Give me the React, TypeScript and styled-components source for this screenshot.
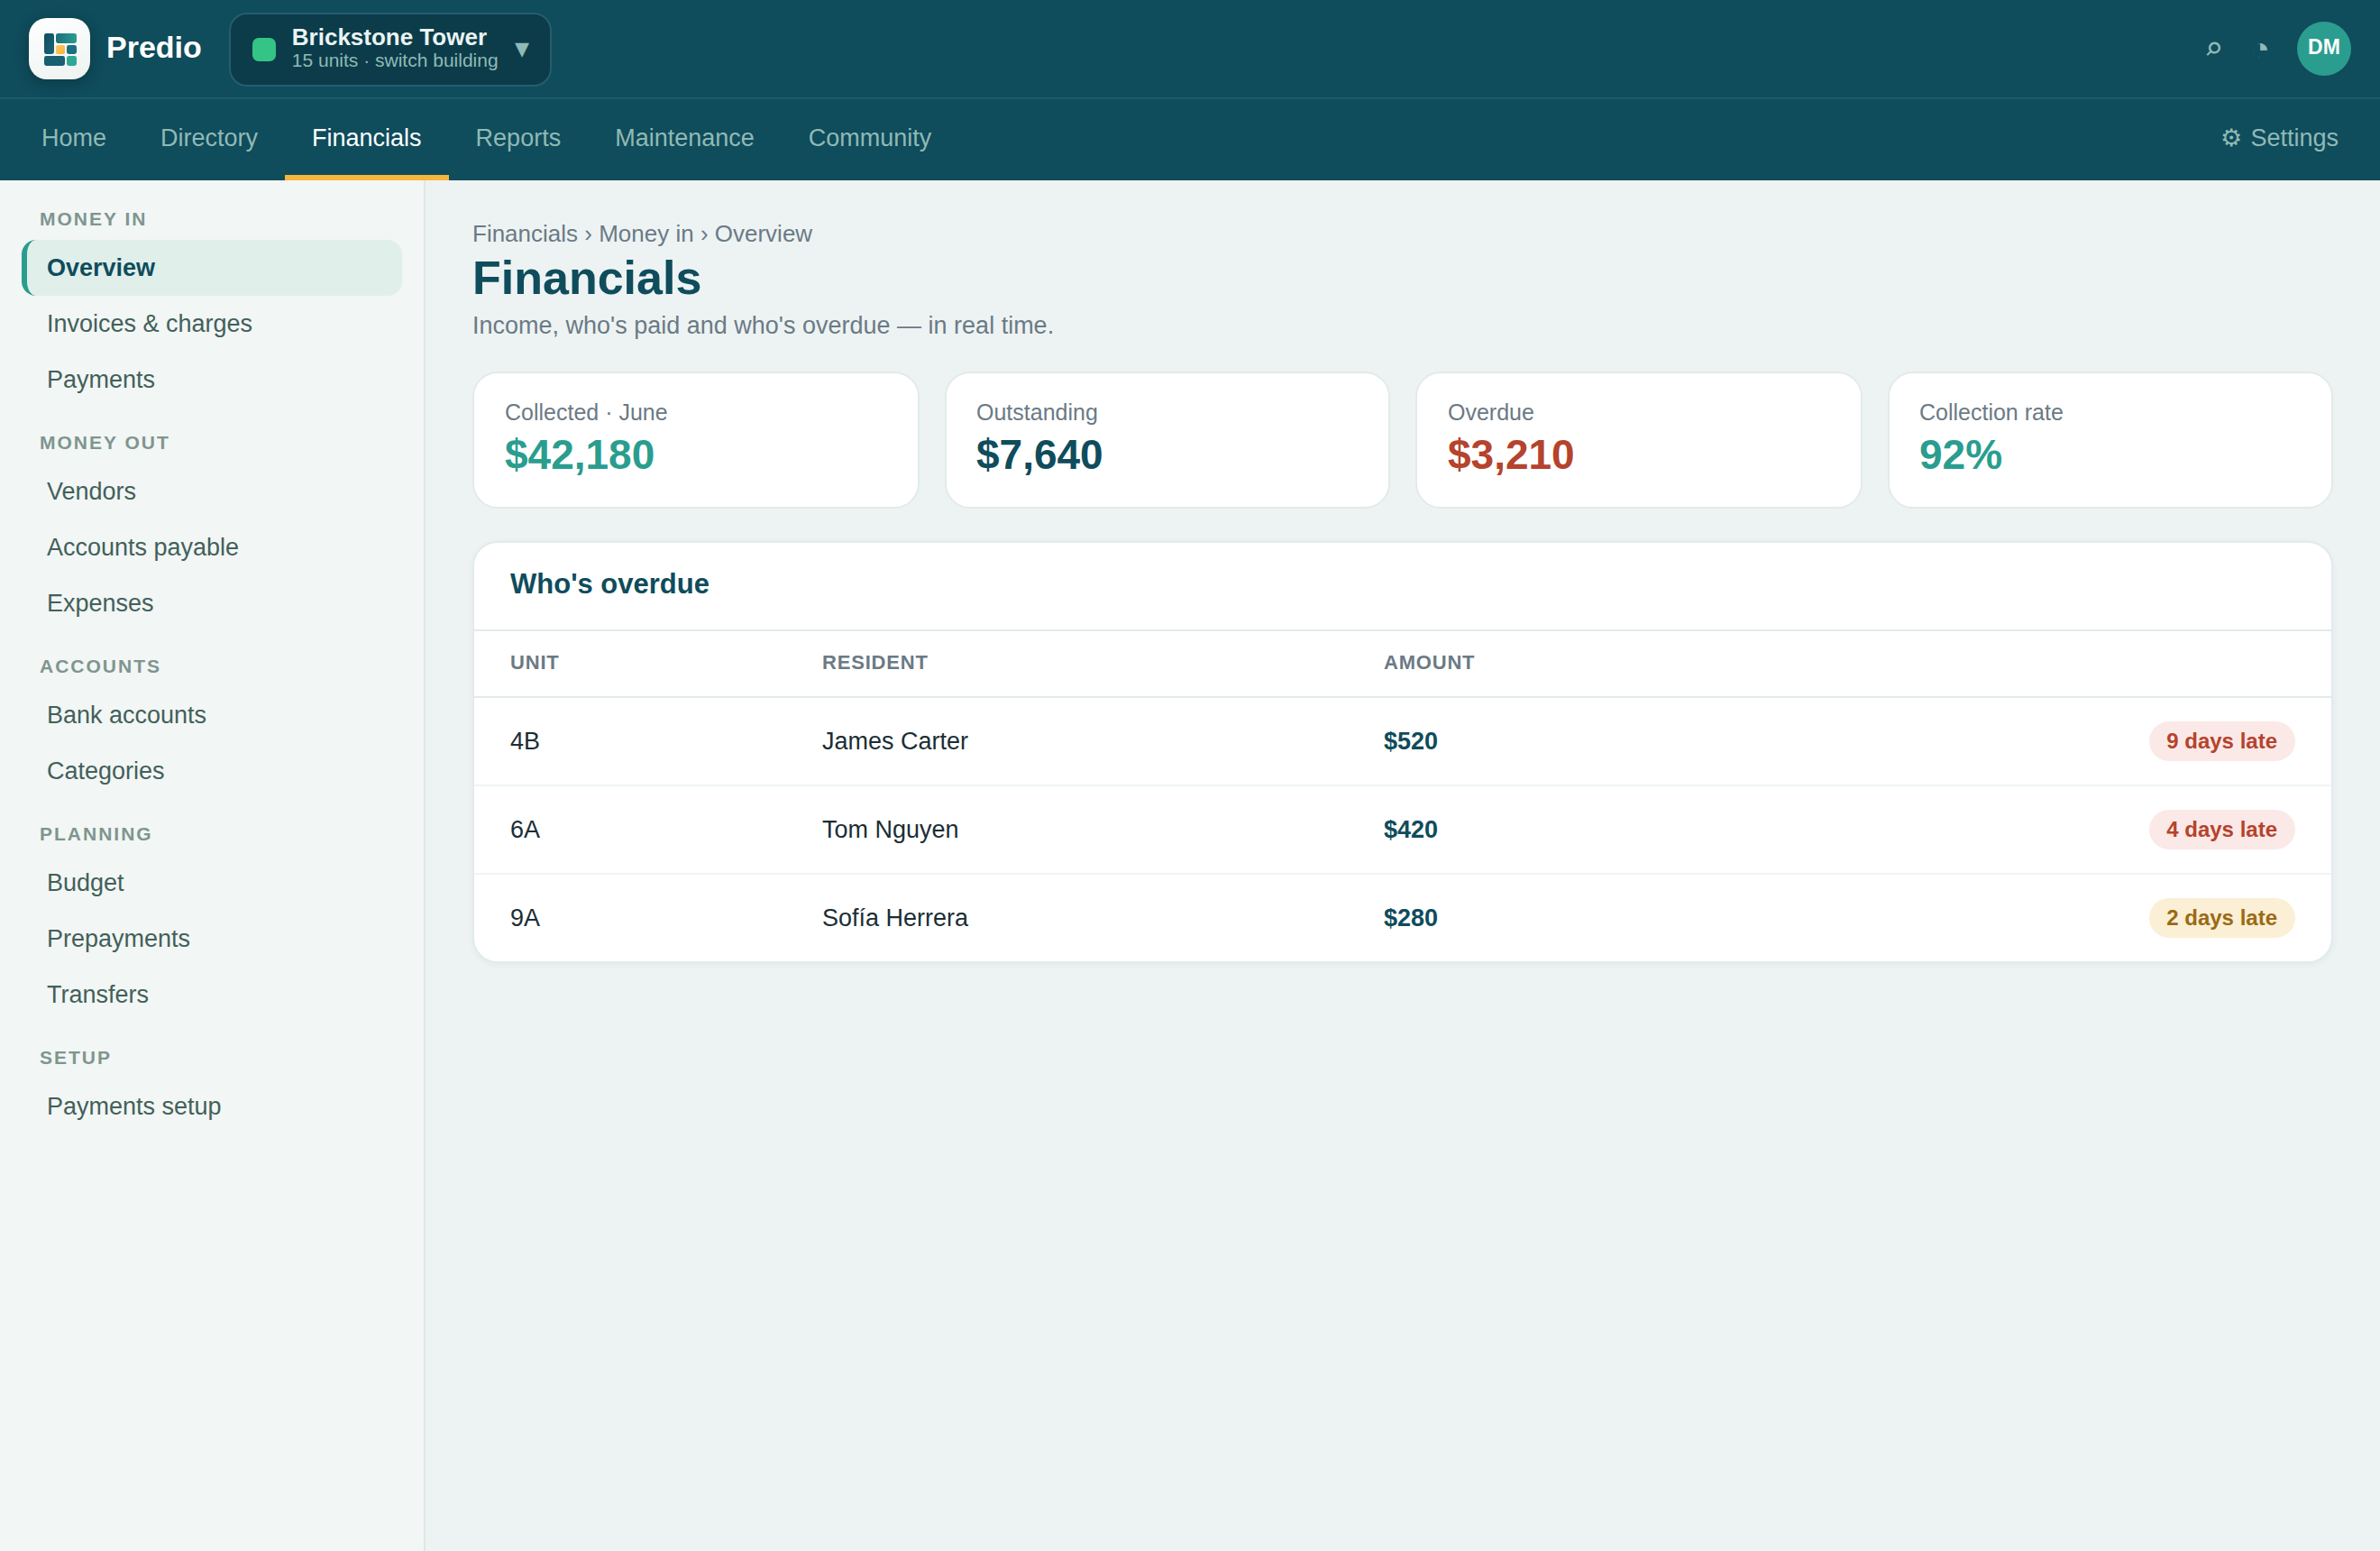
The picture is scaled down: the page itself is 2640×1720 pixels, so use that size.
import styled, { createGlobalStyle } from 'styled-components';

type Tone = 'teal' | 'navy' | 'red';
type BadgeTone = 'danger' | 'warning';

interface NavGroup {
  title: string;
  items: string[];
}
interface Stat {
  label: string;
  value: string;
  tone: Tone;
}
interface OverdueRow {
  unit: string;
  resident: string;
  amount: string;
  status: string;
  tone: BadgeTone;
}

const colors = {
  navy: '#0f4c5c',
  navyDark: '#0c3c49',
  teal: '#2a9d8f',
  amber: '#f6b53d',
  red: '#b5432d',
  mint: '#8fbab5',
  gray: '#6b7a85',
  line: '#e3ebea',
  ink: '#1b2e35',
};

const tones: Record<Tone, string> = {
  teal: colors.teal,
  navy: colors.navy,
  red: colors.red,
};

const tabs = [
  'Home',
  'Directory',
  'Financials',
  'Reports',
  'Maintenance',
  'Community',
];

const navGroups: NavGroup[] = [
  { title: 'Money in', items: ['Overview', 'Invoices & charges', 'Payments'] },
  { title: 'Money out', items: ['Vendors', 'Accounts payable', 'Expenses'] },
  { title: 'Accounts', items: ['Bank accounts', 'Categories'] },
  { title: 'Planning', items: ['Budget', 'Prepayments', 'Transfers'] },
  { title: 'Setup', items: ['Payments setup'] },
];

const stats: Stat[] = [
  { label: 'Collected · June', value: '$42,180', tone: 'teal' },
  { label: 'Outstanding', value: '$7,640', tone: 'navy' },
  { label: 'Overdue', value: '$3,210', tone: 'red' },
  { label: 'Collection rate', value: '92%', tone: 'teal' },
];

const overdue: OverdueRow[] = [
  {
    unit: '4B',
    resident: 'James Carter',
    amount: '$520',
    status: '9 days late',
    tone: 'danger',
  },
  {
    unit: '6A',
    resident: 'Tom Nguyen',
    amount: '$420',
    status: '4 days late',
    tone: 'danger',
  },
  {
    unit: '9A',
    resident: 'Sofía Herrera',
    amount: '$280',
    status: '2 days late',
    tone: 'warning',
  },
];

const LogoMark = () => (
  <svg width="36" height="36" viewBox="0 0 36 36">
    <defs>
      <linearGradient id="brickDark" x1="0" y1="0" x2="1" y2="1">
        <stop offset="0" stopColor="#0f4c5c" />
        <stop offset="1" stopColor="#1b6678" />
      </linearGradient>
      <linearGradient id="brickTeal" x1="0" y1="0" x2="1" y2="0">
        <stop offset="0" stopColor="#1b6f7c" />
        <stop offset="1" stopColor="#2a9d8f" />
      </linearGradient>
      <linearGradient id="brickAmber" x1="0" y1="0" x2="1" y2="1">
        <stop offset="0" stopColor="#ffcb5c" />
        <stop offset="1" stopColor="#f4b13c" />
      </linearGradient>
    </defs>
    <rect x="0" y="0" width="11" height="23" rx="2.4" fill="url(#brickDark)" />
    <rect x="13" y="0" width="23" height="11" rx="2.4" fill="url(#brickTeal)" />
    <rect x="13" y="13" width="10" height="10" rx="2" fill="url(#brickAmber)" />
    <rect x="25" y="13" width="11" height="10" rx="2.4" fill="#1b6f80" />
    <rect x="0" y="25" width="23" height="11" rx="2.4" fill="#185f72" />
    <rect x="25" y="25" width="11" height="11" rx="2.4" fill="#2fa795" />
  </svg>
);

const App: React.FC = () => {
  return (
    <>
      <GlobalStyle />
      <Page>
        <TopBar>
          <LogoBox>
            <LogoMark />
          </LogoBox>
          <BrandName>Predio</BrandName>
          <BuildingSwitch>
            <BuildingDot />
            <BuildingText>
              <BuildingName>Brickstone Tower</BuildingName>
              <BuildingMeta>15 units · switch building</BuildingMeta>
            </BuildingText>
            <Caret>▾</Caret>
          </BuildingSwitch>
          <Actions>
            <SearchIcon>⌕</SearchIcon>
            <ActionIcon>◔</ActionIcon>
            <Avatar>DM</Avatar>
          </Actions>
        </TopBar>
        <TabBar>
          {tabs.map((tab) => (
            <Tab key={tab} $active={tab === 'Financials'}>
              {tab}
            </Tab>
          ))}
          <SettingsTab $active={false}>
            <Gear>⚙</Gear> Settings
          </SettingsTab>
        </TabBar>
        <Body>
          <Sidebar>
            {navGroups.map(({ title, items }) => (
              <div key={title}>
                <GroupTitle>{title}</GroupTitle>
                {items.map((item) => (
                  <NavItem key={item} $active={item === 'Overview'}>
                    {item}
                  </NavItem>
                ))}
              </div>
            ))}
          </Sidebar>
          <Main>
            <Breadcrumb>Financials › Money in › Overview</Breadcrumb>
            <PageTitle>Financials</PageTitle>
            <Lead>Income, who's paid and who's overdue — in real time.</Lead>
            <StatGrid>
              {stats.map(({ label, value, tone }) => (
                <StatCard key={label}>
                  <StatLabel>{label}</StatLabel>
                  <StatValue $tone={tone}>{value}</StatValue>
                </StatCard>
              ))}
            </StatGrid>
            <Panel>
              <PanelTitle>Who's overdue</PanelTitle>
              <Table>
                <thead>
                  <tr>
                    <HeadCell $width={346}>Unit</HeadCell>
                    <HeadCell $width={623}>Resident</HeadCell>
                    <HeadCell>Amount</HeadCell>
                    <HeadCell />
                  </tr>
                </thead>
                <tbody>
                  {overdue.map(({ unit, resident, amount, status, tone }) => (
                    <Row key={unit}>
                      <Cell>{unit}</Cell>
                      <Cell>{resident}</Cell>
                      <AmountCell>{amount}</AmountCell>
                      <StatusCell>
                        <Badge $tone={tone}>{status}</Badge>
                      </StatusCell>
                    </Row>
                  ))}
                </tbody>
              </Table>
            </Panel>
          </Main>
        </Body>
      </Page>
    </>
  );
};

const GlobalStyle = createGlobalStyle`
  * {
    box-sizing: border-box;
  }
  body {
    margin: 0;
    background: #edf3f3;
    font-family: 'Liberation Sans', Arial, sans-serif;
    color: ${colors.ink};
  }
`;
const Page = styled.div`
  display: flex;
  flex-direction: column;
  min-height: 100vh;
`;
const TopBar = styled.header`
  display: flex;
  align-items: center;
  height: 110px;
  padding: 0 32px;
  background: ${colors.navy};
  border-bottom: 2px solid #1d5a69;
`;
const LogoBox = styled.div`
  display: flex;
  align-items: center;
  justify-content: center;
  width: 68px;
  height: 68px;
  padding: 2px 0 0 2px;
  border-radius: 20px;
  background: linear-gradient(160deg, #ffffff, #edf3f2);
  box-shadow: 0 4px 16px rgba(0, 0, 0, 0.25);
`;
const BrandName = styled.div`
  margin: 0 30px 0 18px;
  padding-bottom: 3px;
  font-size: 34px;
  font-weight: 700;
  color: #ffffff;
`;
const BuildingSwitch = styled.div`
  display: flex;
  align-items: center;
  gap: 18px;
  height: 82px;
  margin-top: 2px;
  padding: 0 23px 0 24px;
  border: 2px solid #265d70;
  border-radius: 20px;
  background: ${colors.navyDark};
`;
const BuildingDot = styled.span`
  width: 26px;
  height: 26px;
  border-radius: 7px;
  background: #34c485;
`;
const BuildingText = styled.div`
  padding-bottom: 4px;
`;
const BuildingName = styled.div`
  font-size: 26px;
  line-height: 28px;
  font-weight: 700;
  color: #eaf4f3;
`;
const BuildingMeta = styled.div`
  font-size: 21px;
  line-height: 24px;
  color: ${colors.mint};
`;
const Caret = styled.span`
  padding-bottom: 4px;
  font-size: 32px;
  line-height: 32px;
  color: ${colors.mint};
`;
const Actions = styled.div`
  display: flex;
  align-items: center;
  margin-left: auto;
  gap: 30px;
`;
const ActionIcon = styled.span`
  font-size: 36px;
  line-height: 40px;
  color: ${colors.mint};
`;
const SearchIcon = styled(ActionIcon)`
  font-family: 'DejaVu Sans Mono', monospace;
`;
const Avatar = styled.div`
  display: flex;
  align-items: center;
  justify-content: center;
  width: 60px;
  height: 60px;
  padding-bottom: 4px;
  border-radius: 50%;
  background: ${colors.teal};
  color: #ffffff;
  font-size: 23px;
  font-weight: 700;
`;
const TabBar = styled.nav`
  display: flex;
  height: 90px;
  padding: 0 16px;
  background: ${colors.navy};
`;
const Tab = styled.div<{ $active: boolean }>`
  padding: 28px 30px 0;
  font-size: 27px;
  line-height: 30px;
  color: ${({ $active }) => ($active ? '#ffffff' : colors.mint)};
  border-bottom: 6px solid
    ${({ $active }) => ($active ? colors.amber : 'transparent')};
`;
const SettingsTab = styled(Tab)`
  margin-left: auto;
`;
const Gear = styled.span`
  margin-right: 2px;
`;
const Body = styled.div`
  display: flex;
  flex: 1;
`;
const Sidebar = styled.aside`
  width: 472px;
  flex-shrink: 0;
  padding: 4px 24px;
  background: #f2f6f5;
  border-right: 2px solid #dfe7e7;
`;
const GroupTitle = styled.div`
  padding: 27px 20px 11px;
  font-size: 21px;
  line-height: 24px;
  font-weight: 700;
  letter-spacing: 2px;
  text-transform: uppercase;
  color: #7f958f;
`;
const NavItem = styled.div<{ $active: boolean }>`
  padding: 16px 22px;
  border-left: 6px solid
    ${({ $active }) => ($active ? colors.teal : 'transparent')};
  border-radius: 16px;
  font-size: 27px;
  line-height: 30px;
  font-weight: ${({ $active }) => ($active ? 700 : 400)};
  color: ${({ $active }) => ($active ? colors.navy : '#43605a')};
  background: ${({ $active }) => ($active ? '#e0efea' : 'transparent')};
`;
const Main = styled.main`
  flex: 1;
  min-width: 0;
  padding: 44px 52px;
`;
const Breadcrumb = styled.div`
  font-size: 26px;
  line-height: 30px;
  color: ${colors.gray};
`;
const PageTitle = styled.h1`
  margin: 4px 0 8px;
  font-size: 52px;
  line-height: 60px;
  font-weight: 700;
  color: ${colors.navy};
`;
const Lead = styled.p`
  margin: 0 0 36px;
  font-size: 27px;
  line-height: 30px;
  color: ${colors.gray};
`;
const StatGrid = styled.div`
  display: grid;
  grid-template-columns: repeat(2, 496fr 494fr);
  gap: 28px;
  margin-bottom: 36px;
`;
const StatCard = styled.div`
  height: 152px;
  padding: 29px 34px;
  border: 2px solid ${colors.line};
  border-radius: 28px;
  background: #ffffff;

  &:nth-child(even) {
    padding-left: 33px;
  }
`;
const StatLabel = styled.div`
  font-size: 25px;
  line-height: 28px;
  color: ${colors.gray};
`;
const StatValue = styled.div<{ $tone: Tone }>`
  margin-top: 7px;
  font-size: 46px;
  line-height: 52px;
  font-weight: 700;
  color: ${({ $tone }) => tones[$tone]};
`;
const Panel = styled.section`
  overflow: hidden;
  border: 2px solid ${colors.line};
  border-radius: 28px;
  background: #ffffff;
  box-shadow: 0 2px 6px rgba(15, 76, 92, 0.06);
`;
const PanelTitle = styled.h2`
  height: 98px;
  margin: 0;
  padding: 28px 40px;
  border-bottom: 2px solid ${colors.line};
  font-size: 31px;
  line-height: 36px;
  font-weight: 700;
  color: ${colors.navy};
`;
const Table = styled.table`
  width: 100%;
  table-layout: fixed;
  border-collapse: separate;
  border-spacing: 0;
`;
const HeadCell = styled.th<{ $width?: number }>`
  width: ${({ $width }) => ($width ? `${$width}px` : 'auto')};
  height: 74px;
  padding: 0 40px 2px;
  border-bottom: 2px solid ${colors.line};
  font-size: 22px;
  font-weight: 700;
  letter-spacing: 0.8px;
  text-align: left;
  text-transform: uppercase;
  color: ${colors.gray};
`;
const Cell = styled.td`
  height: 98px;
  padding: 0 40px;
  border-bottom: 2px solid #eff4f4;
  font-size: 27px;
`;
const AmountCell = styled(Cell)`
  font-weight: 700;
  color: ${colors.navy};
`;
const StatusCell = styled(Cell)`
  text-align: right;
`;
const Row = styled.tr`
  &:last-child ${Cell}, &:last-child ${AmountCell}, &:last-child ${StatusCell} {
    height: 96px;
    border-bottom: none;
  }
`;
const Badge = styled.span<{ $tone: BadgeTone }>`
  display: inline-block;
  padding: 0 20px 0 19px;
  border-radius: 22px;
  font-size: 24px;
  line-height: 44px;
  font-weight: 700;
  color: ${({ $tone }) => ($tone === 'danger' ? colors.red : '#9a6a14')};
  background: ${({ $tone }) => ($tone === 'danger' ? '#fbe9e7' : '#fbefd5')};
`;

export default App;
